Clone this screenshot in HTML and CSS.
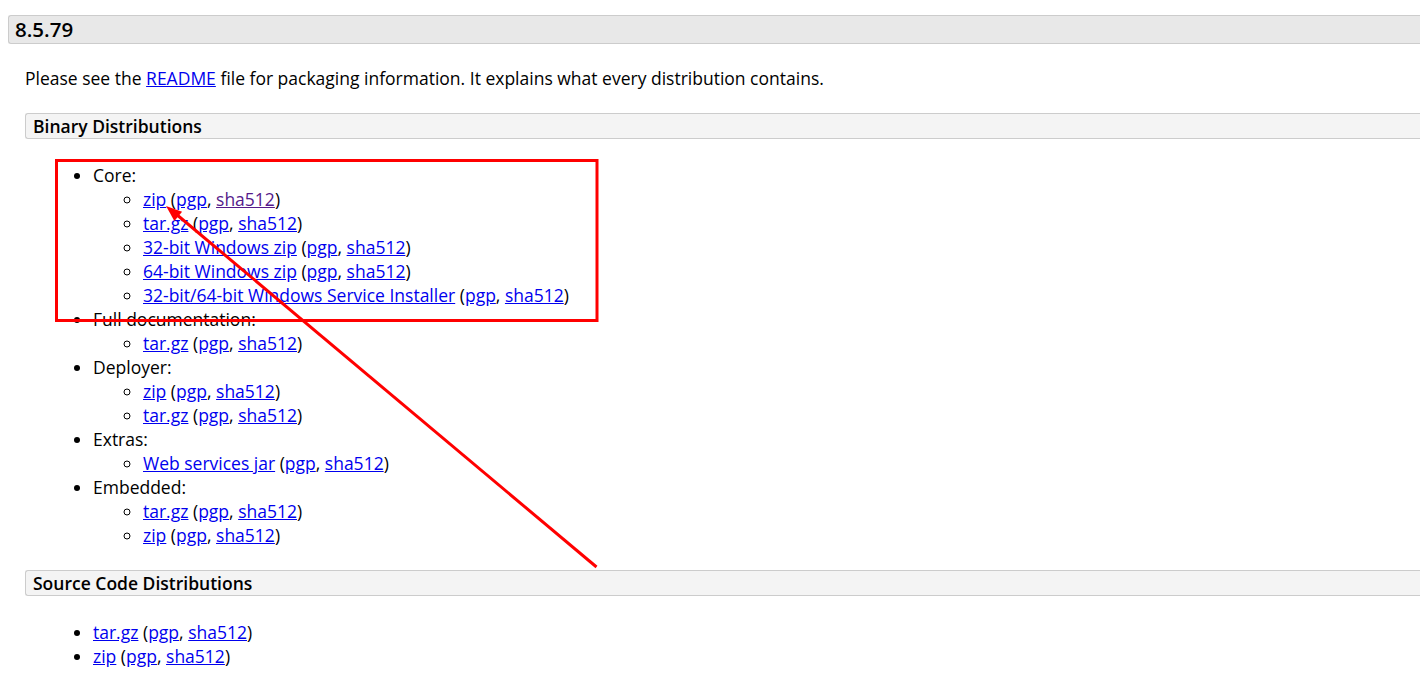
FILE: index.html
```html
<!DOCTYPE html>
<html>
<head>
<meta charset="utf-8">
<link rel="stylesheet" href="styles.css">
</head>
<body>
<div class="page">
  <h3 class="version">8.5.79</h3>
  <div class="text">
    <p class="intro">Please see the <a href="#">README</a> file for packaging information. It explains what every distribution contains.</p>
    <h4 class="section">Binary Distributions</h4>
    <ul class="dist">
      <li>Core:
        <ul>
          <li><a href="#">zip</a> (<a href="#">pgp</a>, <a href="#" class="visited">sha512</a>)</li>
          <li><a href="#">tar.gz</a> (<a href="#">pgp</a>, <a href="#">sha512</a>)</li>
          <li><a href="#">32-bit Windows zip</a> (<a href="#">pgp</a>, <a href="#">sha512</a>)</li>
          <li><a href="#">64-bit Windows zip</a> (<a href="#">pgp</a>, <a href="#">sha512</a>)</li>
          <li><a href="#">32-bit/64-bit Windows Service Installer</a> (<a href="#">pgp</a>, <a href="#">sha512</a>)</li>
        </ul>
      </li>
      <li>Full documentation:
        <ul>
          <li><a href="#">tar.gz</a> (<a href="#">pgp</a>, <a href="#">sha512</a>)</li>
        </ul>
      </li>
      <li>Deployer:
        <ul>
          <li><a href="#">zip</a> (<a href="#">pgp</a>, <a href="#">sha512</a>)</li>
          <li><a href="#">tar.gz</a> (<a href="#">pgp</a>, <a href="#">sha512</a>)</li>
        </ul>
      </li>
      <li>Extras:
        <ul>
          <li><a href="#">Web services jar</a> (<a href="#">pgp</a>, <a href="#">sha512</a>)</li>
        </ul>
      </li>
      <li>Embedded:
        <ul>
          <li><a href="#">tar.gz</a> (<a href="#">pgp</a>, <a href="#">sha512</a>)</li>
          <li><a href="#">zip</a> (<a href="#">pgp</a>, <a href="#">sha512</a>)</li>
        </ul>
      </li>
    </ul>
    <h4 class="section">Source Code Distributions</h4>
    <ul class="dist">
      <li><a href="#">tar.gz</a> (<a href="#">pgp</a>, <a href="#">sha512</a>)</li>
      <li><a href="#">zip</a> (<a href="#">pgp</a>, <a href="#">sha512</a>)</li>
    </ul>
  </div>
</div>
<svg class="annotation" width="1420" height="685" viewBox="0 0 1420 685" xmlns="http://www.w3.org/2000/svg">
  <rect x="56.5" y="160.5" width="540.5" height="160" fill="none" stroke="#ff0000" stroke-width="3"/>
  <line x1="596.5" y1="567" x2="176" y2="214" stroke="#ff0000" stroke-width="3"/>
  <polygon points="166,206 174.4,220.9 182.1,211.7" fill="#ff0000"/>
</svg>
</body>
</html>
```

FILE: styles.css
```css
body {
  margin: 8px 0 8px 8px;
  font-family: "Open Sans", "DejaVu Sans", sans-serif;
  font-size: 17.5px;
  line-height: 24px;
  color: #000;
  background: #fff;
}
.version {
  margin: 7px 0 0 0;
  padding: 2px 6px;
  font-size: 20.5px;
  line-height: 23px;
  font-weight: 600;
  background: #e8e8e8;
  border: 1px solid #ccc;
  border-right: none;
  border-radius: 3px 0 0 3px;
}
.text {
  margin-left: 17px;
}
.intro {
  margin: 22px 0 23px 0;
}
.section {
  margin: 0;
  padding: 0 7px;
  font-size: 17.5px;
  line-height: 24px;
  font-weight: 600;
  background: #f4f4f4;
  border: 1px solid #ccc;
  border-right: none;
  border-radius: 3px 0 0 3px;
}
.dist {
  margin: 24px 0 23px 0;
  padding-left: 68px;
  list-style: disc;
}
.dist ul {
  margin: 0;
  padding-left: 50px;
  list-style: circle;
}
a {
  color: #0000ee;
}
a.visited {
  color: #551a8b;
}
.annotation {
  position: absolute;
  left: 0;
  top: 0;
  pointer-events: none;
}
```
